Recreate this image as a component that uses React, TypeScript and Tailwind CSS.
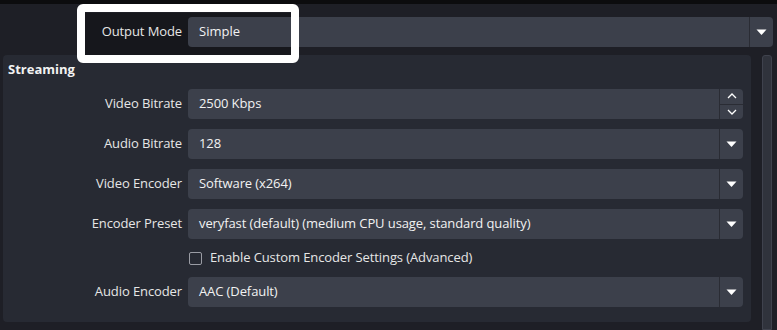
import React from "react";

const font = { fontFamily: '"Open Sans", "Noto Sans", sans-serif' };

function Arrow() {
  return (
    <svg width="11" height="7" viewBox="0 0 11 7">
      <path d="M0.5 0.5 L10.5 0.5 L5.5 6 Z" fill="#ffffff" />
    </svg>
  );
}

function Combo({ value }: { value: string }) {
  return (
    <div className="flex h-[30px] w-[555px] items-center rounded-[4px] bg-[#3c404b]">
      <div className="flex-1 pl-[11px] text-[13px] tracking-[-0.1px] text-[#f2f2f2]">{value}</div>
      <div className="flex h-full w-[24px] items-center justify-center border-l border-[#2a2c34]">
        <Arrow />
      </div>
    </div>
  );
}

function Spin({ value }: { value: string }) {
  return (
    <div className="flex h-[30px] w-[555px] items-center rounded-[4px] bg-[#3c404b]">
      <div className="flex-1 pl-[11px] text-[13px] tracking-[-0.1px] text-[#f2f2f2]">{value}</div>
      <div className="flex h-full w-[24px] flex-col border-l border-[#2a2c34]">
        <div className="flex flex-1 items-center justify-center border-b border-[#2a2c34]">
          <svg width="10" height="6" viewBox="0 0 10 6">
            <path d="M1 5 L5 1 L9 5" stroke="#ffffff" strokeWidth="1.3" fill="none" />
          </svg>
        </div>
        <div className="flex flex-1 items-center justify-center">
          <svg width="10" height="6" viewBox="0 0 10 6">
            <path d="M1 1 L5 5 L9 1" stroke="#ffffff" strokeWidth="1.3" fill="none" />
          </svg>
        </div>
      </div>
    </div>
  );
}

function Row({ label, children }: { label: string; children: React.ReactNode }) {
  return (
    <div className="flex items-center">
      <div className="w-[179px] text-right text-[13px] tracking-[-0.1px] text-[#e6e6e6]">{label}</div>
      <div className="ml-[6px]">{children}</div>
    </div>
  );
}

export default function App() {
  return (
    <div className="relative h-[330px] w-[777px] overflow-hidden bg-[#1e1f26]" style={font}>
      <div className="h-[4px] bg-[#0c0c0e]" />
      {/* highlight box background */}
      <div className="absolute left-[85px] top-[13px] z-0 h-[42px] w-[206px] bg-[#16171c]" />
      <div className="relative z-10 mt-[13px] flex items-center">
        <div className="w-[182px] text-right text-[13px] tracking-[-0.1px] text-[#e6e6e6]">Output Mode</div>
        <div className="ml-[6px] flex h-[30px] w-[585px] items-center rounded-[4px] bg-[#3c404b]">
          <div className="flex-1 pl-[11px] text-[13px] text-[#f2f2f2]">Simple</div>
          <div className="flex h-full w-[24px] items-center justify-center border-l border-[#2a2c34]">
            <Arrow />
          </div>
        </div>
      </div>
      {/* highlight border */}
      <div className="pointer-events-none absolute left-[77px] top-[4px] z-20 h-[59px] w-[222px] rounded-[6px] border-[8px] border-white" />

      <div className="mt-[8px] flex">
        <div className="ml-[3px] h-[267px] w-[748px] rounded-[4px] bg-[#272a33]">
          <div className="pl-[5px] pt-[5px] text-[13px] font-bold leading-[18px] text-[#f2f2f2]">Streaming</div>
          <div className="mt-[11px] flex flex-col gap-[10px]">
            <Row label="Video Bitrate">
              <Spin value="2500 Kbps" />
            </Row>
            <Row label="Audio Bitrate">
              <Combo value="128" />
            </Row>
            <Row label="Video Encoder">
              <Combo value="Software (x264)" />
            </Row>
            <Row label="Encoder Preset">
              <Combo value="veryfast (default) (medium CPU usage, standard quality)" />
            </Row>
            <div className="flex h-[18px] items-center pl-[186px]">
              <div className="h-[13px] w-[13px] rounded-[2px] border border-[#9a9ca4]" />
              <div className="ml-[8px] text-[13px] tracking-[-0.1px] text-[#e6e6e6]">Enable Custom Encoder Settings (Advanced)</div>
            </div>
            <Row label="Audio Encoder">
              <Combo value="AAC (Default)" />
            </Row>
          </div>
        </div>
        <div className="ml-[11px] h-[275px] w-[10px] rounded-t-[3px] border border-[#3f424d] bg-[#30333c]" />
      </div>
    </div>
  );
}
